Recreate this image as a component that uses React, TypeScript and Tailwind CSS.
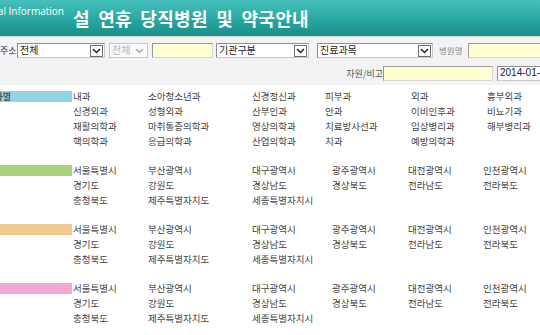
import React from 'react';

// Cropped view of a holiday hospital / pharmacy guide page (Korean).

const FONT = "font-['Noto_Sans_CJK_KR','Noto_Sans',sans-serif]";

function Chevron({ color = '#333' }: { color?: string }) {
  return (
    <svg width="9" height="6" viewBox="0 0 9 6" fill="none">
      <path d="M1 1 L4.5 4.5 L8 1" stroke={color} strokeWidth="1.5" />
    </svg>
  );
}

function SelectBox({
  width,
  text,
  disabled = false,
}: {
  width: string;
  text: string;
  disabled?: boolean;
}) {
  return (
    <div
      className={`${width} h-[15px] shrink-0 flex items-start border ${
        disabled ? 'border-[#c6c6c6] bg-[#fafafa]' : 'border-[#8e8e8e] border-r-[#c9c9c9] border-b-[#c9c9c9] bg-white'
      }`}
    >
      <span
        className={`flex-1 pl-[2px] text-[10px] leading-[12px] ${disabled ? 'text-[#b4b4b4]' : 'text-[#222]'}`}
      >
        {text}
      </span>
      <span
        className={`w-[13px] h-[12px] mt-[1px] mr-[1px] flex items-center justify-center ${
          disabled ? '' : 'border border-[#6f6f6f] bg-white'
        }`}
      >
        <Chevron color={disabled ? '#a8a8a8' : '#222'} />
      </span>
    </div>
  );
}

function YellowInput({ width }: { width: string }) {
  return <div className={`${width} h-[15px] shrink-0 border border-[#9a9a9a] border-r-[#d6d6d6] border-b-[#d6d6d6] bg-[#ffffd2]`} />;
}

type Section = {
  color: string;
  label?: string;
  cols: string;
  rows: string[][];
};

const regionRows = [
  ['서울특별시', '부산광역시', '대구광역시', '광주광역시', '대전광역시', '인천광역시'],
  ['경기도', '강원도', '경상남도', '경상북도', '전라남도', '전라북도'],
  ['충청북도', '제주특별자치도', '세종특별자치시'],
];

const regionCols = 'grid-cols-[75px_104px_80px_76px_75px_1fr]';

const sections: Section[] = [
  {
    color: 'bg-[#94d3e5]',
    label: '진료과별',
    cols: 'grid-cols-[75px_104px_73px_86px_76px_1fr]',
    rows: [
      ['내과', '소아청소년과', '신경정신과', '피부과', '외과', '흉부외과'],
      ['신경외과', '성형외과', '산부인과', '안과', '이비인후과', '비뇨기과'],
      ['재활의학과', '마취통증의학과', '영상의학과', '치료방사선과', '임상병리과', '해부병리과'],
      ['핵의학과', '응급의학과', '산업의학과', '치과', '예방의학과'],
    ],
  },
  { color: 'bg-[#a8d27c]', cols: regionCols, rows: regionRows },
  { color: 'bg-[#f2c98f]', cols: regionCols, rows: regionRows },
  { color: 'bg-[#f1a8d2]', cols: regionCols, rows: regionRows },
];

export default function App() {
  return (
    <div className={`w-[540px] h-[335px] overflow-hidden bg-white ${FONT}`}>
      {/* Header band */}
      <div className="h-[37px] flex items-start bg-gradient-to-b from-[#46c1bb] via-[#2aa9a3] to-[#198f89] border-b border-[#d8d8d8]">
        <div className="w-[64px] mt-[4px] flex justify-end overflow-hidden whitespace-nowrap">
          <span className="font-['Open_Sans',sans-serif] text-[10px] text-white leading-[14px]">Medical Information</span>
        </div>
        <h1 className="ml-[9px] mt-[8px] text-[18px] leading-[21px] font-bold text-white tracking-[0.3px] [word-spacing:4px] whitespace-nowrap">
          설 연휴 당직병원 및 약국안내
        </h1>
      </div>

      {/* Search form */}
      <div className="h-[48px] bg-[#f3f3f3] pt-[6px]">
        <div className="flex items-center h-[15px] whitespace-nowrap">
          <span className="w-[17px] shrink-0 text-[9px] text-[#333]">주소</span>
          <SelectBox width="w-[88px]" text="전체" />
          <div className="ml-[4px]">
            <SelectBox width="w-[39px]" text="전체" disabled />
          </div>
          <div className="ml-[4px]">
            <YellowInput width="w-[61px]" />
          </div>
          <div className="ml-[3px]">
            <SelectBox width="w-[93px]" text="기관구분" />
          </div>
          <div className="ml-[8px]">
            <SelectBox width="w-[116px]" text="진료과목" />
          </div>
          <span className="ml-[6px] shrink-0 text-[8.5px] text-[#888]">병원명</span>
          <div className="ml-[6px]">
            <YellowInput width="w-[90px]" />
          </div>
        </div>
        <div className="flex items-center h-[15px] mt-[8px] pl-[339px] whitespace-nowrap">
          <span className="w-[44px] shrink-0 text-right text-[9px] text-[#555]">자원/비고</span>
          <YellowInput width="w-[110px]" />
          <div className="ml-[4px] w-[70px] h-[15px] shrink-0 border border-[#8e8e8e] border-r-[#c9c9c9] border-b-[#c9c9c9] bg-white pl-[2px] text-[10px] leading-[12px] text-[#222] font-['Liberation_Sans',sans-serif]">
            2014-01-28
          </div>
        </div>
      </div>

      {/* Category sections */}
      <div className="pt-[4px] flex flex-col gap-[14px]">
        {sections.map((s, i) => (
          <div key={i} className="flex">
            <div className="w-[73px] shrink-0 pt-[2px]">
              <div className={`w-[72px] h-[11px] ${s.color} flex items-center`}>
                {s.label && (
                  <span className="w-[11px] flex justify-end overflow-hidden whitespace-nowrap text-[9px] leading-[11px] text-[#222]">
                    {s.label}
                  </span>
                )}
              </div>
            </div>
            <div className={`flex-1 grid ${s.cols}`}>
              {s.rows.flatMap((r, ri) =>
                Array.from({ length: 6 }, (_, ci) => (
                  <span key={`${ri}-${ci}`} className="h-[15px] text-[9.5px] leading-[15px] text-[#444] whitespace-nowrap">
                    {r[ci] ?? ''}
                  </span>
                )),
              )}
            </div>
          </div>
        ))}
      </div>
    </div>
  );
}
